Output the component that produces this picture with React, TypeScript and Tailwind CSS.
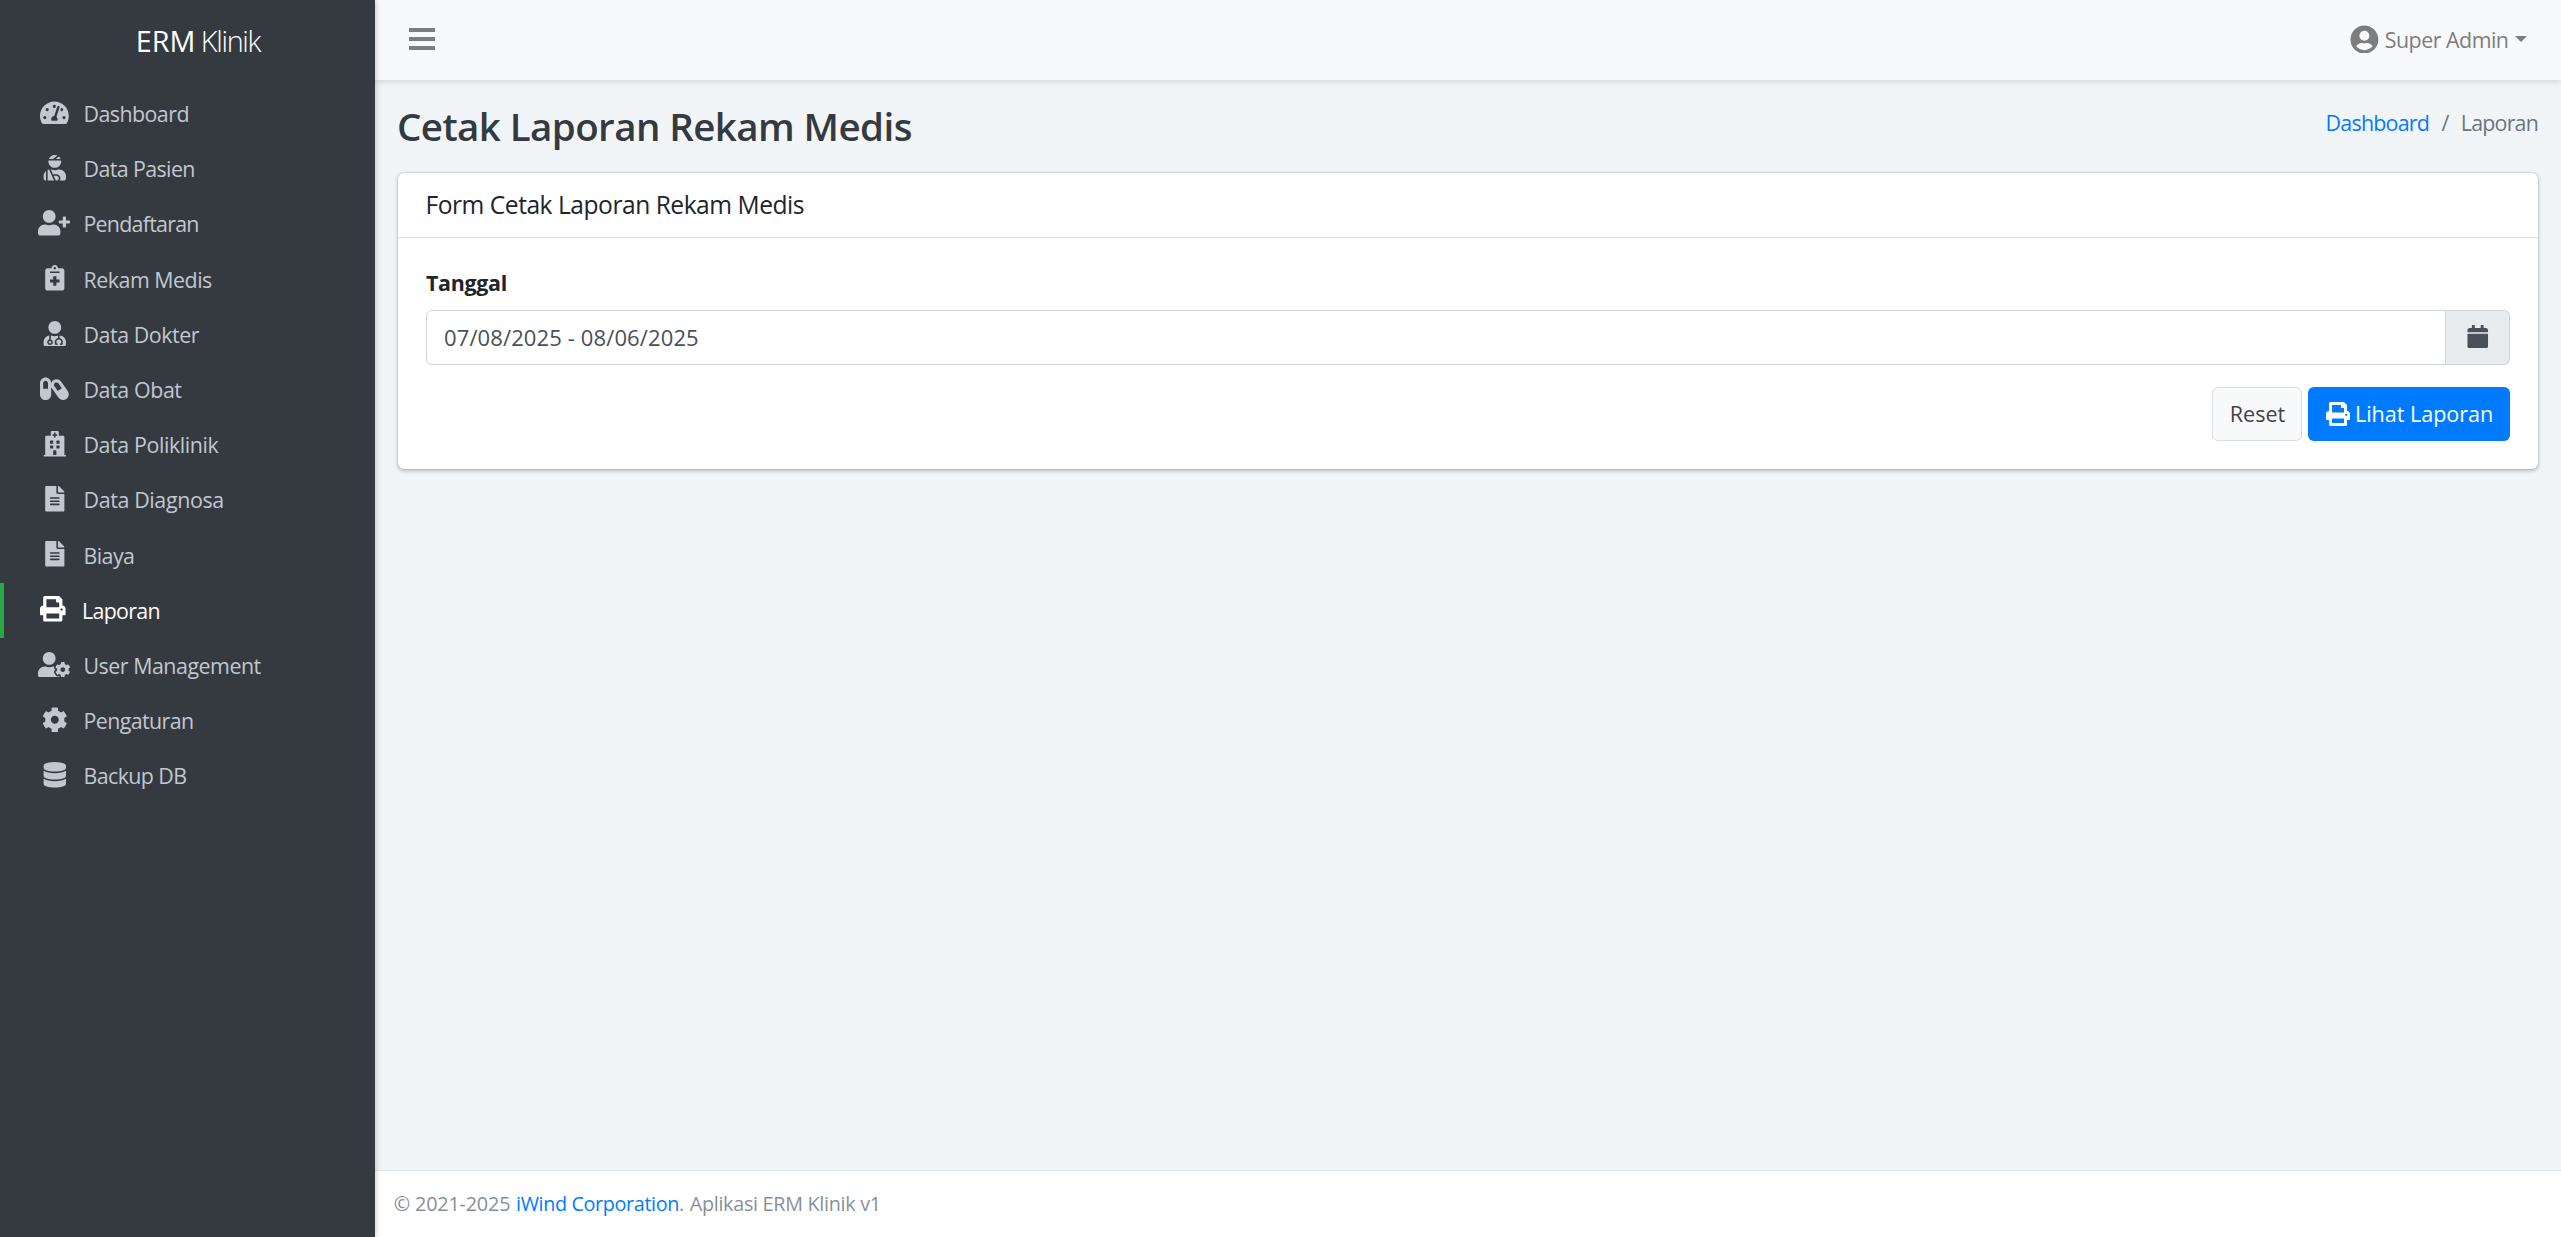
import React from 'react';
import type { IconType } from 'react-icons';
import {
  FaCalendar,
  FaCapsules,
  FaCog,
  FaDatabase,
  FaFileAlt,
  FaHospital,
  FaNotesMedical,
  FaPrint,
  FaTachometerAlt,
  FaUserCircle,
  FaUserCog,
  FaUserInjured,
  FaUserMd,
  FaUserPlus,
} from 'react-icons/fa';

type NavItem = { label: string; icon: IconType; size: string; spacing: string; active?: boolean };

const SQUARE = 'h-[25.6px] w-[25.6px]';
const WIDE = 'h-[25.6px] w-[28.8px]';
const EXTRA_WIDE = 'h-[25.6px] w-[32px]';

const NAV: NavItem[] = [
  { label: 'Dashboard', icon: FaTachometerAlt, size: WIDE, spacing: 'tracking-[-0.55px]' },
  { label: 'Data Pasien', icon: FaUserInjured, size: SQUARE, spacing: 'tracking-[-0.6px]' },
  { label: 'Pendaftaran', icon: FaUserPlus, size: EXTRA_WIDE, spacing: 'tracking-[-0.75px]' },
  { label: 'Rekam Medis', icon: FaNotesMedical, size: SQUARE, spacing: 'tracking-[-0.48px]' },
  { label: 'Data Dokter', icon: FaUserMd, size: SQUARE, spacing: 'tracking-[-0.45px]' },
  { label: 'Data Obat', icon: FaCapsules, size: WIDE, spacing: 'tracking-[-0.4px]' },
  { label: 'Data Poliklinik', icon: FaHospital, size: SQUARE, spacing: 'tracking-[-0.4px]' },
  { label: 'Data Diagnosa', icon: FaFileAlt, size: SQUARE, spacing: 'tracking-[-0.36px]' },
  { label: 'Biaya', icon: FaFileAlt, size: SQUARE, spacing: 'tracking-[-0.55px]' },
  { label: 'Laporan', icon: FaPrint, size: SQUARE, spacing: 'tracking-[-0.65px]', active: true },
  { label: 'User Management', icon: FaUserCog, size: EXTRA_WIDE, spacing: 'tracking-[-0.48px]' },
  { label: 'Pengaturan', icon: FaCog, size: SQUARE, spacing: 'tracking-[-0.6px]' },
  { label: 'Backup DB', icon: FaDatabase, size: SQUARE, spacing: 'tracking-[-0.6px]' },
];

function NavLink({ label, icon: Icon, size, spacing, active }: NavItem) {
  return (
    <a
      className={
        active
          ? 'flex h-[55.2px] items-center border-l-4 border-[#28a745] pl-[29.7px] text-white'
          : 'flex h-[55.2px] items-center pl-[35.3px] text-[#c2c7d0]'
      }
    >
      <span className="flex w-[38.4px] shrink-0 justify-center pb-[2.4px]">
        <Icon className={size} />
      </span>
      <span className={`ml-[9.8px] text-[21.4px] leading-none whitespace-nowrap ${spacing}`}>{label}</span>
    </a>
  );
}

function Sidebar() {
  return (
    <aside className="z-20 flex w-[375px] shrink-0 flex-col bg-[#343a40] shadow-[0_0_6px_rgba(0,0,0,0.28)]">
      <div className="flex h-[82px] shrink-0 items-center gap-[5.3px] pl-[135.8px] text-[28.8px] leading-none text-white">
        <span>ERM</span>
        <span className="font-light tracking-[-1.3px]">Klinik</span>
      </div>
      <nav className="mt-[4.2px] flex flex-col">
        {NAV.map((item) => (
          <NavLink key={item.label} {...item} />
        ))}
      </nav>
    </aside>
  );
}

function Topbar() {
  return (
    <header className="z-10 flex h-[80px] shrink-0 items-center justify-between bg-[#f8f9fb] pr-[34px] pl-[34px] text-[#7d7d7e] shadow-[0_2px_6px_rgba(0,0,0,0.12)]">
      <svg className="mb-[2px] h-[22px] w-[26px]" viewBox="0 0 26 22" fill="currentColor">
        <rect width="26" height="4" />
        <rect y="9" width="26" height="4" />
        <rect y="18" width="26" height="4" />
      </svg>
      <div className="flex items-center">
        <FaUserCircle className="mb-[2px] text-[28.8px]" />
        <span className="ml-[5.7px] text-[21.4px] leading-none tracking-[-0.49px]">Super Admin</span>
        <svg className="mb-[2px] ml-[6.5px] h-[6px] w-[12px]" viewBox="0 0 12 6" fill="currentColor">
          <path d="M0 0h12L6 6z" />
        </svg>
      </div>
    </header>
  );
}

function ReportCard() {
  return (
    <section className="mx-[23px] rounded-[6px] bg-white text-[#212529] shadow-[0_0_1.5px_rgba(0,0,0,0.25),0_1.5px_4.5px_rgba(0,0,0,0.25)]">
      <div className="flex h-[65px] items-center border-b border-[#dcdfe2] pl-[27.5px]">
        <h3 className="text-[24.6px] leading-none tracking-[-0.48px]">Form Cetak Laporan Rekam Medis</h3>
      </div>
      <div className="px-[28px] pt-[33px] pb-[28px]">
        <label className="block text-[21.4px] leading-[23px] font-bold tracking-[-0.3px]">Tanggal</label>
        <div className="mt-[16px] flex h-[55px]">
          <div className="flex flex-1 items-center rounded-l-[6px] border border-[#ced4da] pb-[1px] pl-[17px] text-[22px] leading-none tracking-[0.12px] text-[#495057]">
            07/08/2025 - 08/06/2025
          </div>
          <div className="flex w-[64px] items-center justify-center rounded-r-[6px] border border-l-0 border-[#ced4da] bg-[#e9ecef] pb-[2px] text-[23.5px] text-[#495057]">
            <FaCalendar />
          </div>
        </div>
        <div className="mt-[22px] flex h-[54px] justify-end gap-[6px] text-[21.6px] leading-none">
          <button className="w-[90px] rounded-[6px] border border-[#dddddd] bg-[#f8f9fb] pl-[1px] text-[#444444]">
            Reset
          </button>
          <button className="flex w-[202px] items-center rounded-[6px] bg-[#007bff] pl-[18px] text-white">
            <FaPrint className="text-[24px]" />
            <span className="ml-[5px] tracking-[-0.05px] whitespace-nowrap">Lihat Laporan</span>
          </button>
        </div>
      </div>
    </section>
  );
}

export default function App() {
  return (
    <div className="flex h-screen w-full overflow-hidden bg-[#f2f5f8] font-['Open_Sans','Noto_Sans',sans-serif]">
      <Sidebar />
      <div className="flex min-w-0 flex-1 flex-col">
        <Topbar />
        <main className="flex-1">
          <div className="flex h-[93px] items-center justify-between pr-[23px] pl-[22px]">
            <h1 className="text-[38.5px] leading-none font-semibold tracking-[-0.58px] text-[#343a40]">
              Cetak Laporan Rekam Medis
            </h1>
            <div className="mb-[8px] flex text-[21.4px] leading-none text-[#6c757d]">
              <a className="tracking-[-0.75px] text-[#007bff]">Dashboard</a>
              <span className="mr-[11.5px] ml-[12.3px]">/</span>
              <span className="tracking-[-0.8px]">Laporan</span>
            </div>
          </div>
          <ReportCard />
        </main>
        <footer className="flex h-[67px] shrink-0 items-center gap-[5.8px] border-t border-[#dee2e6] bg-white pl-[18.8px] text-[19.8px] leading-none text-[#869099]">
          <span className="tracking-[-0.18px]">© 2021-2025</span>
          <span className="flex gap-[5.5px]">
            <span>
              <a className="tracking-[-0.37px] text-[#007bff]">iWind Corporation</a>.
            </span>
            <span className="tracking-[-0.3px]">Aplikasi ERM Klinik v1</span>
          </span>
        </footer>
      </div>
    </div>
  );
}
